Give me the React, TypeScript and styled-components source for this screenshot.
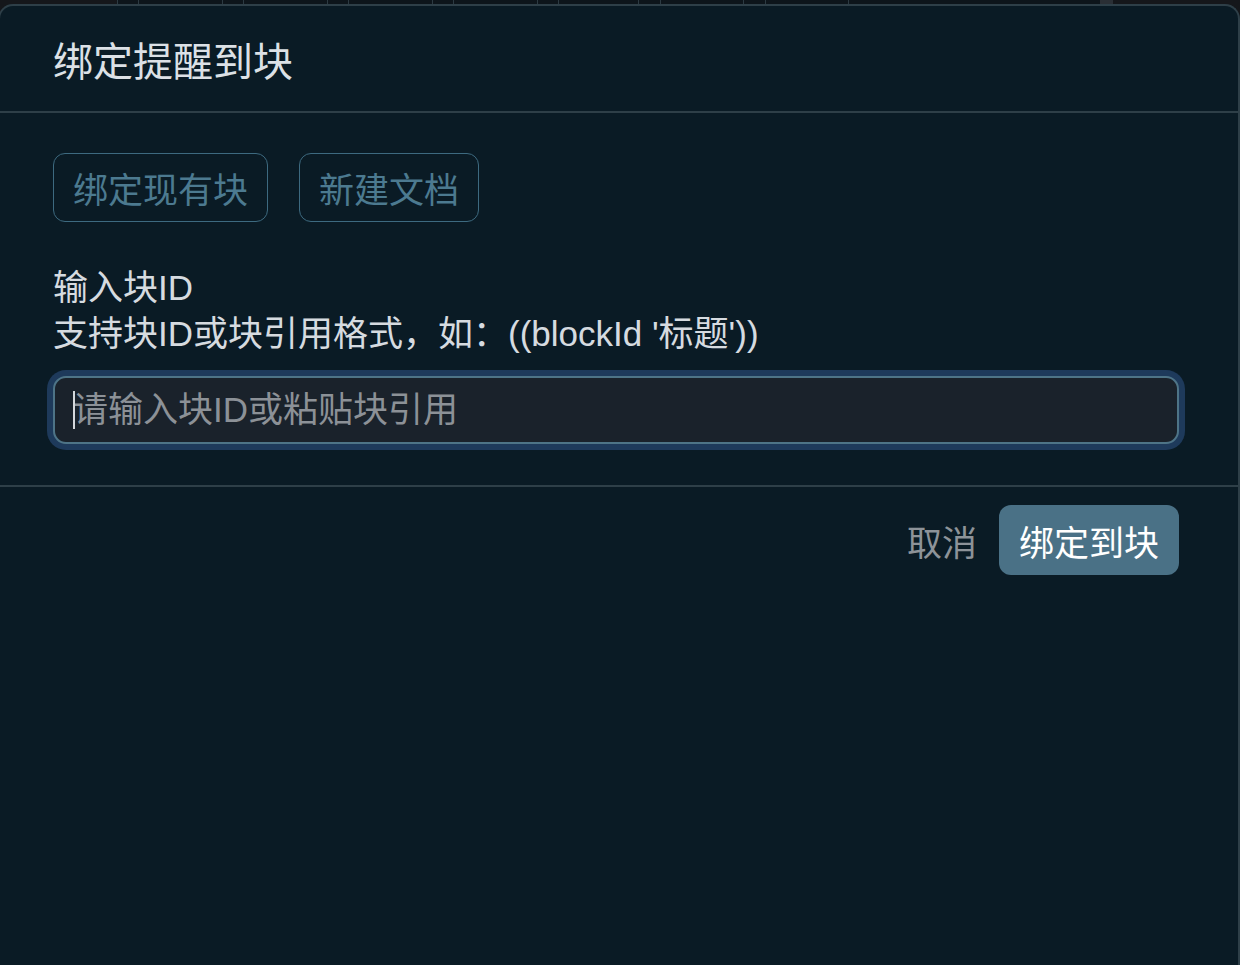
import React from "react"
import styled, { createGlobalStyle } from "styled-components"

const GlobalStyle = createGlobalStyle`
  html, body {
    margin: 0;
    padding: 0;
    background: #0a1b25;
  }
  body {
    font-family: "Liberation Sans", "Noto Sans CJK SC", sans-serif;
  }
  * {
    box-sizing: border-box;
  }
`

// table columns peeking out above the dialog
const stripCells = [117, 21, 84, 21, 84, 21, 84, 21, 84, 21, 80, 22, 83, 22, 83, 252, 13, 125]

const Page = styled.div`
  width: 1240px;
  height: 965px;
  display: flex;
  flex-direction: column;
  overflow: hidden;
  background: #15171b;
`

const Strip = styled.div`
  height: 4px;
  display: flex;
  flex-shrink: 0;
`

const StripCell = styled.div<{ $w: number; $tone: "side" | "cell" | "bar" }>`
  width: ${p => p.$w}px;
  flex-shrink: 0;
  background: ${p => (p.$tone === "side" ? "#15171b" : p.$tone === "bar" ? "#2a2f35" : "#0d151b")};
  border-left: ${p => (p.$tone === "cell" ? "1px solid #2c3a42" : "none")};
`

const Dialog = styled.div`
  flex: 1;
  margin-left: -2px;
  display: flex;
  flex-direction: column;
  background: #0a1b25;
  border: 2px solid #2e3f48;
  border-bottom: none;
  border-radius: 15px 15px 0 0;
`

const Header = styled.div`
  height: 107px;
  display: flex;
  align-items: center;
  padding: 0 59px 0 53px;
  border-bottom: 2px solid #2e3f48;
`

const Title = styled.h2`
  margin: 0;
  font-size: 40px;
  font-weight: 400;
  color: #dce1e6;
`

const Body = styled.div`
  padding: 40px 59px 41px 53px;
  display: flex;
  flex-direction: column;
  border-bottom: 2px solid #2e3f48;
`

const Tabs = styled.div`
  display: flex;
  gap: 31px;
`

const TabButton = styled.button`
  height: 69px;
  padding: 0 19px;
  display: inline-flex;
  align-items: center;
  background: transparent;
  border: 1px solid #3d6a80;
  border-radius: 12px;
  color: #4c7a90;
  font-family: inherit;
  font-size: 35px;
`

const Label = styled.div`
  margin-top: 43px;
  font-size: 35px;
  line-height: 46px;
  color: #d6dbe0;
`

const Field = styled.div`
  position: relative;
  margin-top: 19px;
`

const Input = styled.input`
  display: block;
  height: 68px;
  width: 100%;
  padding: 0 18px;
  background: #1a222b;
  border: 2px solid #4e7487;
  border-radius: 13px;
  box-shadow: 0 0 0 6px #1e3a5b;
  outline: none;
  color: #e0e4e8;
  caret-color: transparent;
  font-family: inherit;
  font-size: 35px;
  &::placeholder {
    color: #8c9197;
  }
`

const Caret = styled.span`
  position: absolute;
  left: 20px;
  top: 15px;
  width: 2px;
  height: 38px;
  background: #d4d8dc;
  pointer-events: none;
`

const Footer = styled.div`
  padding: 18px 59px 0 53px;
  display: flex;
  justify-content: flex-end;
  align-items: center;
  gap: 22px;
`

const Action = styled.button<{ $primary?: boolean }>`
  height: 70px;
  padding: 0 ${p => (p.$primary ? "20px" : "0")};
  display: inline-flex;
  align-items: center;
  border: none;
  border-radius: 12px;
  background: ${p => (p.$primary ? "#4a7186" : "transparent")};
  color: ${p => (p.$primary ? "#ffffff" : "#8d9399")};
  font-family: inherit;
  font-size: 35px;
`

export default function App() {
  return (
    <Page>
      <GlobalStyle />
      <Strip>
        {stripCells.map((w, i) => (
          <StripCell
            key={i}
            $w={w}
            $tone={i === 0 || i === stripCells.length - 1 ? "side" : i === stripCells.length - 2 ? "bar" : "cell"}
          />
        ))}
      </Strip>
      <Dialog>
        <Header>
          <Title>绑定提醒到块</Title>
        </Header>
        <Body>
          <Tabs>
            <TabButton>绑定现有块</TabButton>
            <TabButton>新建文档</TabButton>
          </Tabs>
          <Label>
            输入块ID
            <br />
            支持块ID或块引用格式，如：((blockId '标题'))
          </Label>
          <Field>
            <Input autoFocus placeholder="请输入块ID或粘贴块引用" />
            <Caret />
          </Field>
        </Body>
        <Footer>
          <Action>取消</Action>
          <Action $primary>绑定到块</Action>
        </Footer>
      </Dialog>
    </Page>
  )
}
